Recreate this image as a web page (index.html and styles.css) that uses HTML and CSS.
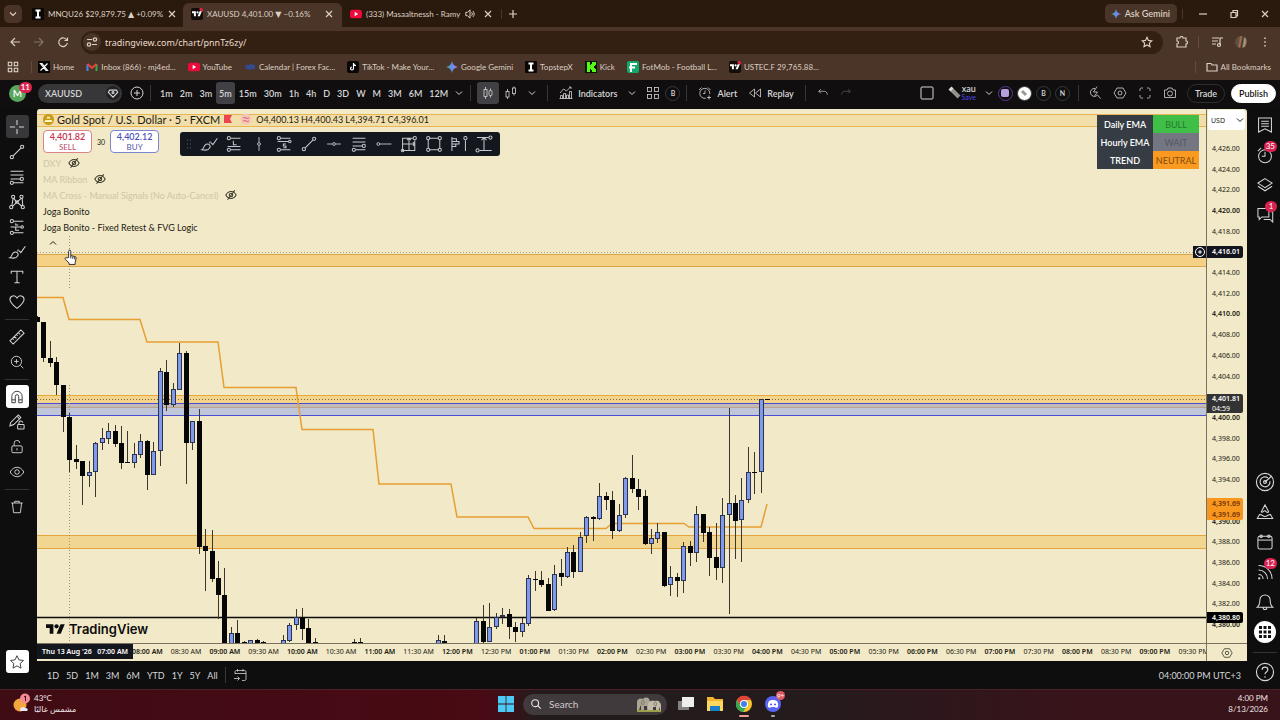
FILE: index.html
```html
<!DOCTYPE html>
<html lang="en">
<head>
    <meta charset="UTF-8">
    <title>XAUUSD 4,401.00 ▼ −0.16%</title>
    <link rel="stylesheet" href="styles.css">
</head>
<body>
    <svg class="defs" aria-hidden="true">
        <symbol id="chevron" viewBox="0 0 10 10"><path d="M2 3.500l3 3 3-3"/></symbol>
        <symbol id="close" viewBox="0 0 10 10"><path d="M2 2l6 6M8 2l-6 6"/></symbol>
        <symbol id="plus" viewBox="0 0 10 10"><path d="M5 1v8M1 5h8"/></symbol>
        <symbol id="tv" viewBox="0 0 36 28"><path fill="currentColor" stroke="none" d="M14 22H7V11H0V4h14v18zM28 22h-8l7.500-18h8L28 22z"/><circle cx="20" cy="8" r="4" fill="currentColor" stroke="none"/></symbol>
        <symbol id="youtube" viewBox="0 0 14 12"><rect x="0" y="1" width="14" height="10" rx="3" fill="#f0093a" stroke="none"/><path d="M5.500 3.500v5l4-2.500z" fill="#fff" stroke="none"/></symbol>
        <symbol id="spark" viewBox="0 0 12 12"><path fill="url(#sparkFill)" stroke="none" d="M6 0c.6 3.500 2.500 5.400 6 6-3.500.6-5.400 2.500-6 6-.6-3.500-2.500-5.400-6-6 3.500-.6 5.400-2.500 6-6z"/></symbol>
        <symbol id="topstep" viewBox="0 0 12 12"><rect width="12" height="12" rx="1" fill="#0b0706" stroke="none"/><path d="M3.500 2.500h5M3.500 9.500h5M6 2.500v7" stroke="#fff" stroke-width="2"/></symbol>
        <symbol id="cross" viewBox="0 0 28 28"><path d="M14 3v8M14 17v8M3 14h8M17 14h8"/></symbol>
        <symbol id="trend" viewBox="0 0 28 28"><path d="M8 20L20 8"/><circle cx="6" cy="22" r="2.500"/><circle cx="22" cy="6" r="2.500"/></symbol>
        <symbol id="fib" viewBox="0 0 28 28"><path d="M4 5h20M4 11h20M4 17h15M9 23h15"/><circle cx="21.500" cy="17" r="2.500"/><circle cx="6" cy="23" r="2.500"/></symbol>
        <symbol id="pattern" viewBox="0 0 28 28"><path d="M6 20L8 8M9 8l4 6M7 21l6-6 8-7M22 8l1 12M15 15l7 6"/><circle cx="8" cy="6" r="2.500"/><circle cx="21" cy="6" r="2.500"/><circle cx="14" cy="14" r="2"/><circle cx="5" cy="22" r="2.500"/><circle cx="23" cy="22" r="2.500"/></symbol>
        <symbol id="position" viewBox="0 0 28 28"><path d="M9 5h15M4 14h16M9 23h15M12 8v3h4M12 14v5h5"/><circle cx="6" cy="5" r="2.500"/><circle cx="6" cy="23" r="2.500"/><circle cx="22" cy="14" r="2"/></symbol>
        <symbol id="longpos" viewBox="0 0 28 28"><path d="M9 5h15M4 18h20M9 23h15M13 9v6h5"/><circle cx="6" cy="5" r="2.500"/><circle cx="6" cy="23" r="2.500"/></symbol>
        <symbol id="shortpos" viewBox="0 0 28 28"><path d="M9 5h15M4 10h17M9 23h15M17 14h-4v3h4v3h-4"/><circle cx="6" cy="5" r="2.500"/><circle cx="6" cy="23" r="2.500"/><circle cx="23" cy="10" r="2"/></symbol>
        <symbol id="brush" viewBox="0 0 28 28"><path d="M3 23c3-1 3-9 8-9 4 0 6 3 4 6-2 4-7 4-12 3zM17 12l3 3 7-10M15 13l1-3"/></symbol>
        <symbol id="text" viewBox="0 0 28 28"><path d="M5 9V5h18v4M14 5v18M10 23h8"/></symbol>
        <symbol id="heart" viewBox="0 0 28 28"><path d="M14 24C8 19 3 15 3 10c0-6 8-8 11-2 3-6 11-4 11 2 0 5-5 9-11 14z"/></symbol>
        <symbol id="ruler" viewBox="0 0 28 28"><path d="M3 20L20 3l5 5L8 25zM7 16l2 2M10 13l3 3M13 10l2 2M16 7l3 3"/></symbol>
        <symbol id="zoomin" viewBox="0 0 28 28"><circle cx="13" cy="13" r="9"/><path d="M13 9v8M9 13h8M20 20l5 5"/></symbol>
        <symbol id="magnet" viewBox="0 0 28 28"><path d="M5 24V13a9 9 0 0118 0v11h-6V13a3 3 0 00-6 0v11zM5 19h6M17 19h6"/></symbol>
        <symbol id="penlock" viewBox="0 0 28 28"><path d="M3 20l1-5L16 3l4 4L9 18zM14 5l4 4"/><rect x="15" y="18" width="10" height="7" rx="1"/><path d="M17 18v-2a3 3 0 016-1M20 21v1"/></symbol>
        <symbol id="lock" viewBox="0 0 28 28"><rect x="5" y="12" width="18" height="12" rx="2"/><path d="M9 12V8a5 5 0 0110-1M14 16v4"/></symbol>
        <symbol id="eye" viewBox="0 0 28 28"><path d="M2 14c6-11 18-11 24 0-6 11-18 11-24 0z"/><circle cx="14" cy="14" r="4"/></symbol>
        <symbol id="eyeoff" viewBox="0 0 28 28"><path d="M2 14c6-11 18-11 24 0-6 11-18 11-24 0zM6 25L23 3"/><circle cx="14" cy="14" r="4"/></symbol>
        <symbol id="trash" viewBox="0 0 28 28"><path d="M4 7h20M10 7V4h8v3M6 7l2 17h12l2-17"/></symbol>
        <symbol id="star" viewBox="0 0 28 28"><path d="M14 3l3.400 7.300 7.900 1-5.800 5.500 1.500 7.900-7-3.900-7 3.900 1.500-7.900L2.700 11.300l7.900-1z"/></symbol>
        <symbol id="vline" viewBox="0 0 28 28"><path d="M14 2v9M14 17v9"/><circle cx="14" cy="14" r="2.500"/></symbol>
        <symbol id="hline" viewBox="0 0 28 28"><path d="M2 14h9M17 14h9"/><circle cx="14" cy="14" r="2.500"/></symbol>
        <symbol id="hray" viewBox="0 0 28 28"><path d="M7 14h20"/><circle cx="4" cy="14" r="2.500"/></symbol>
        <symbol id="range" viewBox="0 0 28 28"><path d="M20 5H4v19h19V8M4 14h19M14 5v19M11 8l3-3 3 3M20 11l3 3-3 3"/><circle cx="23" cy="5" r="2.500"/><circle cx="4" cy="24" r="2"/></symbol>
        <symbol id="rect" viewBox="0 0 28 28"><path d="M7 5h14M7 23h14M5 7v14M23 7v14"/><circle cx="5" cy="5" r="2.500"/><circle cx="23" cy="5" r="2.500"/><circle cx="5" cy="23" r="2.500"/><circle cx="23" cy="23" r="2.500"/></symbol>
        <symbol id="profile" viewBox="0 0 28 28"><path d="M3 3v22M3 6h7v4h4v4H9v4H3M3 10h7M3 14h6M24 8v17"/><circle cx="24" cy="5" r="2.500"/></symbol>
        <symbol id="pricerange" viewBox="0 0 28 28"><path d="M3 4h18M7 24h19M14 4v20M10 8l4-4 4 4"/><circle cx="24" cy="4" r="2.500"/><circle cx="4" cy="24" r="2.500"/></symbol>
        <symbol id="candles" viewBox="0 0 28 28"><path d="M9 2v5M9 21v5M19 5v4M19 19v4"/><rect x="6" y="7" width="6" height="14"/><rect x="16" y="9" width="6" height="10" rx="2"/></symbol>
        <symbol id="candles2" viewBox="0 0 28 28"><path d="M7 6v5M7 22v4M20 1v3M20 15v4"/><rect x="4" y="11" width="6" height="11"/><rect x="17" y="4" width="6" height="11"/></symbol>
        <symbol id="indicators" viewBox="0 0 28 28"><path d="M2 14l7-8 6 4 8-8M20 2h4v4M3 25v-6h4v6M9 25V15h4v10M15 25v-7h4v7M21 25V11h4v14M1 25h26"/></symbol>
        <symbol id="grid" viewBox="0 0 28 28"><rect x="3" y="3" width="8" height="8"/><rect x="17" y="3" width="8" height="8"/><rect x="3" y="17" width="8" height="8"/><rect x="17" y="17" width="8" height="8"/></symbol>
        <symbol id="alert" viewBox="0 0 28 28"><path d="M23.500 16a10 10 0 10-8 8.500M14 9v6h-4M2 8l5-5M20 3l5 5M22 19v8M18 23h8"/></symbol>
        <symbol id="replay" viewBox="0 0 28 28"><path d="M13 6L3 14l10 8zM25 6l-10 8 10 8z"/></symbol>
        <symbol id="undo" viewBox="0 0 28 28"><path d="M9 5l-5 5 5 5M4 10h13c4 0 7 3 7 8"/></symbol>
        <symbol id="gear" viewBox="0 0 28 28"><path d="M8 4h12l6 10-6 10H8L2 14z"/><circle cx="14" cy="14" r="4"/></symbol>
        <symbol id="full" viewBox="0 0 28 28"><path d="M4 10V7c0-2 1-3 3-3h3M18 4h3c2 0 3 1 3 3v3M24 18v3c0 2-1 3-3 3h-3M10 24H7c-2 0-3-1-3-3v-3"/></symbol>
        <symbol id="camera" viewBox="0 0 28 28"><path d="M3 8h5l2-4h8l2 4h5v15H3z"/><circle cx="14" cy="15" r="5"/></symbol>
        <symbol id="search" viewBox="0 0 28 28"><circle cx="12" cy="12" r="8"/><path d="M18 18l7 7"/></symbol>
        <symbol id="quick" viewBox="0 0 28 28"><path d="M14 5a8 8 0 10 5 13l6 7M18 1l-7 11h8l-6 8"/></symbol>
        <symbol id="watch" viewBox="0 0 28 28"><path d="M4 3h20v22l-10-5-10 5zM8 8h12M8 12h12M8 16h12"/></symbol>
        <symbol id="clock" viewBox="0 0 28 28"><circle cx="14" cy="16" r="10"/><path d="M14 9v7h-5M3 8l5-5"/></symbol>
        <symbol id="layers" viewBox="0 0 28 28"><path d="M14 4l11 7-11 7-11-7zM3 16l11 7 11-7"/></symbol>
        <symbol id="chat" viewBox="0 0 28 28"><path d="M3 4h17v13H9l-4 4v-4H3zM23 9h3v16l-4-4H12"/></symbol>
        <symbol id="target" viewBox="0 0 28 28"><circle cx="14" cy="14" r="12"/><path d="M18 8a7 7 0 103 5M14 14l9-8"/><circle cx="14" cy="14" r="2"/></symbol>
        <symbol id="pyramid" viewBox="0 0 28 28"><path d="M8 14l6-11 6 11M8 14c3 2 4-3 6-2s3 4 6 2M6 17l-4 7h24l-4-7M6 18c3 0 5 3 8 3s5-3 8-3"/></symbol>
        <symbol id="calendar" viewBox="0 0 28 28"><rect x="3" y="5" width="22" height="20" rx="3"/><path d="M3 11h22"/><circle cx="8" cy="5" r="2"/><circle cx="20" cy="5" r="2"/></symbol>
        <symbol id="rss" viewBox="0 0 28 28"><path d="M4 4c12 0 21 9 21 21M4 11c8 0 14 6 14 14M4 18c4 0 7 3 7 7"/><circle cx="5" cy="24" r="1"/></symbol>
        <symbol id="bell" viewBox="0 0 28 28"><path d="M2 22c4-3 4-7 4-11a8 8 0 0116 0c0 4 0 8 4 11zM11 22c0 5 6 5 6 0"/></symbol>
        <symbol id="help" viewBox="0 0 28 28"><circle cx="14" cy="14" r="12"/><path d="M10 11c0-5 8-5 8 0 0 3-4 3-4 6M14 20v2"/></symbol>
        <symbol id="goto" viewBox="0 0 28 28"><path d="M4 12V8c0-2 1-3 3-3h16c2 0 3 1 3 3v14c0 2-1 3-3 3h-5M4 11h22M9 2v5M20 2v5M2 21h11M9 17l4 4-4 4"/></symbol>
        <linearGradient id="sparkFill"><stop offset="0" stop-color="#58b070"/><stop offset=".5" stop-color="#5b8cf5"/><stop offset="1" stop-color="#c583e0"/></linearGradient>
    </svg>

    <!-- browser chrome -->
    <header class="browser">
        <div class="tabs">
            <button class="tab-search" aria-label="Search tabs"><svg class="icon s10"><use href="#chevron"/></svg></button>
            <div class="tab">
                <svg class="icon s12"><use href="#topstep"/></svg>
                <span class="tab-title">MNQU26 $29,879.75 ▲ +0.09%</span>
                <button class="bare" aria-label="Close tab"><svg class="icon s10"><use href="#close"/></svg></button>
            </div>
            <div class="tab active">
                <span class="tv-badge"><svg class="icon s10"><use href="#tv"/></svg></span>
                <span class="tab-title">XAUUSD 4,401.00 ▼ −0.16%</span>
                <button class="bare" aria-label="Close tab"><svg class="icon s10"><use href="#close"/></svg></button>
            </div>
            <div class="tab">
                <svg class="icon s12"><use href="#youtube"/></svg>
                <span class="tab-title">(333) Masaaltnessh - Ramy</span>
                <svg class="icon s10 speaker" viewBox="0 0 12 12"><path d="M1 4h2l3-3v10l-3-3H1zM8 4c1 1 1 3 0 4M9.500 2.500c2 2 2 5 0 7"/></svg>
                <button class="bare" aria-label="Close tab"><svg class="icon s10"><use href="#close"/></svg></button>
            </div>
            <button class="bare new-tab" aria-label="New tab"><svg class="icon s10"><use href="#plus"/></svg></button>
            <button class="gemini"><svg class="icon s10"><use href="#spark"/></svg>Ask Gemini</button>
            <div class="window-buttons">
                <button class="bare" aria-label="Minimize"><svg class="icon s10" viewBox="0 0 10 10"><path d="M1 5h8"/></svg></button>
                <button class="bare" aria-label="Restore"><svg class="icon s10" viewBox="0 0 10 10"><path d="M2 3.500h5v5H2zM4 3V1.500h4.500V7H7"/></svg></button>
                <button class="bare" aria-label="Close"><svg class="icon s10"><use href="#close"/></svg></button>
            </div>
        </div>
        <div class="address-row">
            <button class="bare" aria-label="Back"><svg class="icon s12" viewBox="0 0 12 12"><path d="M11 6H2M6 2L2 6l4 4"/></svg></button>
            <button class="bare dim" aria-label="Forward"><svg class="icon s12" viewBox="0 0 12 12"><path d="M1 6h9M6 2l4 4-4 4"/></svg></button>
            <button class="bare" aria-label="Reload"><svg class="icon s12" viewBox="0 0 12 12"><path d="M10 4.500A4.300 4.300 0 1010.300 7M10.500 1.500v3h-3"/></svg></button>
            <div class="omnibox">
                <span class="site-info"><svg class="icon s12" viewBox="0 0 12 12"><path d="M1 3.500h5M6 8.500h5"/><circle cx="9" cy="3.500" r="1.700"/><circle cx="3" cy="8.500" r="1.700"/></svg></span>
                <input class="url" type="text" aria-label="Address" value="tradingview.com/chart/pnnTz6zy/">
                <button class="bare" aria-label="Bookmark"><svg class="icon bold s12"><use href="#star"/></svg></button>
            </div>
            <div class="extensions">
                <button class="bare" aria-label="Extensions"><svg class="icon s12" viewBox="0 0 12 12"><path d="M1 2h3c0-2 3-2 3 0h3v3c2 0 2 3 0 3v3H1V8c2 0 2-3 0-3z"/></svg></button>
                <button class="bare" aria-label="Media"><svg class="icon s12" viewBox="0 0 12 12"><path d="M1 2h7M1 5h6M1 8h4M9 9V2h3"/><circle cx="8" cy="9" r="1.500"/></svg></button>
                <span class="avatar-photo"></span>
                <button class="bare" aria-label="Menu"><svg class="icon s12" viewBox="0 0 12 12"><path d="M6 1.500v1.500M6 5.300v1.500M6 9v1.500" stroke-width="1.500"/></svg></button>
            </div>
        </div>
        <nav class="bookmarks">
            <button class="bare" aria-label="Tab groups"><svg class="icon bold s12"><use href="#grid"/></svg></button>
            <a href="#" class="first"><svg class="icon s12" viewBox="0 0 12 12"><rect width="12" height="12" fill="#080605" stroke="none"/><path d="M2.500 2.500h1.500l5.500 7H8zM9.500 2.500l-7 7" stroke="#fff"/></svg>Home</a>
            <a href="#"><svg class="icon s12" viewBox="0 0 12 12"><path d="M1.500 10V3" stroke="#4285f4" stroke-width="2"/><path d="M10.500 10V3" stroke="#34a853" stroke-width="2"/><path d="M1.500 3L6 7l4.500-4" stroke="#ea4335" stroke-width="2"/></svg>Inbox (866) - mj4ed...</a>
            <a href="#"><svg class="icon s12"><use href="#youtube"/></svg>YouTube</a>
            <a href="#"><svg class="icon s12" viewBox="0 0 12 12"><path d="M1 4h4l2-1 4 1v4H8l-2 1-4-1z" fill="#334a90" stroke="none"/></svg>Calendar | Forex Fac...</a>
            <a href="#"><svg class="icon s12" viewBox="0 0 12 12"><rect width="12" height="12" rx="2" fill="#080605" stroke="none"/><path d="M6.500 2v5.500a1.500 1.500 0 11-1.500-1.500M6.500 2.500c.5 1.500 1.500 2 2.500 2" stroke="#fff"/></svg>TikTok - Make Your...</a>
            <a href="#"><svg class="icon s12"><use href="#spark"/></svg>Google Gemini</a>
            <a href="#"><svg class="icon s12"><use href="#topstep"/></svg>TopstepX</a>
            <a href="#"><svg class="icon s12" viewBox="0 0 12 12"><rect width="12" height="12" fill="#081606" stroke="none"/><path d="M2 1h3v3h1V3h1V1h4v3h-1v1H9v2h1v1h1v3H7V9H6V8H5v3H2z" fill="#53fc18" stroke="none"/></svg>Kick</a>
            <a href="#"><svg class="icon s12" viewBox="0 0 12 12"><rect width="12" height="12" rx="2" fill="#12a96a" stroke="none"/><path d="M4 11V3h6M2 6.500h6" stroke="#fff" stroke-width="2"/></svg>FotMob - Football L...</a>
            <a href="#"><span class="tv-badge"><svg class="icon s10"><use href="#tv"/></svg></span>USTEC.F 29,765.88...</a>
            <a href="#" class="all"><svg class="icon s12" viewBox="0 0 12 12"><path d="M1 2.500h4l1 1.500h5v6H1z"/></svg>All Bookmarks</a>
        </nav>
    </header>

    <!-- chart toolbar -->
    <div class="toolbar">
        <button class="user" aria-label="Profile">M<span class="badge">11</span></button>
        <button class="symbol">XAUUSD<svg class="icon s14" viewBox="0 0 12 12"><circle cx="6" cy="6" r="6" fill="#222225" stroke="none"/><path d="M3 3.500h6l1 2L6 9.500l-4-4z"/><circle cx="6" cy="5.500" r=".8"/></svg></button>
        <button class="bare" aria-label="Add symbol"><svg class="icon s14" viewBox="0 0 14 14"><circle cx="7" cy="7" r="6"/><path d="M7 4v6M4 7h6"/></svg></button>
        <i class="sep"></i>
        <div class="intervals">
            <button>1m</button><button>2m</button><button>3m</button><button class="on">5m</button><button>15m</button><button>30m</button><button>1h</button><button>4h</button><button>D</button><button>3D</button><button>W</button><button>M</button><button>3M</button><button>6M</button><button>12M</button>
            <button class="last" aria-label="More intervals"><svg class="icon s10"><use href="#chevron"/></svg></button>
        </div>
        <i class="sep"></i>
        <button class="tool on" aria-label="Candles"><svg class="icon s14"><use href="#candles"/></svg></button>
        <button class="tool" aria-label="Bars"><svg class="icon s14"><use href="#candles2"/></svg></button>
        <button class="bare more" aria-label="Chart types"><svg class="icon s10"><use href="#chevron"/></svg></button>
        <i class="sep"></i>
        <button class="wide"><svg class="icon s14"><use href="#indicators"/></svg>Indicators</button>
        <button class="bare more" aria-label="Favorite indicators"><svg class="icon s10"><use href="#chevron"/></svg></button>
        <button class="tool" aria-label="Templates"><svg class="icon s14"><use href="#grid"/></svg></button>
        <button class="letter">B</button>
        <i class="sep"></i>
        <button class="wide"><svg class="icon s14"><use href="#alert"/></svg>Alert</button>
        <button class="wide"><svg class="icon s14"><use href="#replay"/></svg>Replay</button>
        <i class="sep"></i>
        <button class="tool" aria-label="Undo"><svg class="icon s12"><use href="#undo"/></svg></button>
        <button class="tool dim" aria-label="Redo"><svg class="icon s12 flip"><use href="#undo"/></svg></button>
        <div class="toolbar-right">
            <button class="tool" aria-label="Layout"><svg class="icon s14" viewBox="0 0 14 14"><rect x="1" y="1" width="12" height="12" rx="1"/></svg></button>
            <button class="layout-name"><svg class="icon s14" viewBox="0 0 14 14"><path d="M3 3l8 8" stroke="#96918c" stroke-width="4"/><path d="M2 2l2 2" stroke="#ddd" stroke-width="4"/></svg><span>xau<small>Save</small></span></button>
            <button class="bare more" aria-label="Layouts"><svg class="icon s10"><use href="#chevron"/></svg></button>
            <div class="letters">
                <button class="letter purple" aria-label="Layout 1"><span></span></button>
                <button class="letter white" aria-label="Layout 2"><svg class="icon s10" viewBox="0 0 10 10"><path d="M3 3l4 4" stroke="#999" stroke-width="3"/></svg></button>
                <button class="letter">B</button>
                <button class="letter">N</button>
            </div>
            <i class="sep"></i>
            <div class="actions">
                <button class="tool" aria-label="Quick search"><svg class="icon s14"><use href="#quick"/></svg></button>
                <button class="tool" aria-label="Settings"><svg class="icon s14"><use href="#gear"/></svg></button>
                <button class="tool" aria-label="Fullscreen"><svg class="icon s14"><use href="#full"/></svg></button>
                <button class="tool" aria-label="Snapshot"><svg class="icon s14"><use href="#camera"/></svg></button>
            </div>
            <button class="pill">Trade</button>
            <button class="pill publish">Publish</button>
        </div>
    </div>

    <div class="workspace">
        <aside class="draw-tools">
            <button class="on" aria-label="Cross"><svg class="icon s18"><use href="#cross"/></svg></button>
            <button aria-label="Trend line"><svg class="icon s18"><use href="#trend"/></svg></button>
            <button aria-label="Fib retracement"><svg class="icon s18"><use href="#fib"/></svg></button>
            <button aria-label="Patterns"><svg class="icon s18"><use href="#pattern"/></svg></button>
            <button aria-label="Positions"><svg class="icon s18"><use href="#position"/></svg></button>
            <button aria-label="Brush"><svg class="icon s18"><use href="#brush"/></svg></button>
            <button aria-label="Text"><svg class="icon s18"><use href="#text"/></svg></button>
            <button aria-label="Icons"><svg class="icon s18"><use href="#heart"/></svg></button>
            <hr>
            <button aria-label="Measure"><svg class="icon s18"><use href="#ruler"/></svg></button>
            <button aria-label="Zoom in"><svg class="icon s16"><use href="#zoomin"/></svg></button>
            <hr>
            <button class="white" aria-label="Magnet"><svg class="icon s16"><use href="#magnet"/></svg></button>
            <button aria-label="Keep drawing"><svg class="icon s18"><use href="#penlock"/></svg></button>
            <button aria-label="Lock"><svg class="icon s16"><use href="#lock"/></svg></button>
            <button aria-label="Hide"><svg class="icon s16"><use href="#eye"/></svg></button>
            <hr>
            <button aria-label="Remove"><svg class="icon s16"><use href="#trash"/></svg></button>
            <button class="white favorites" aria-label="Favorites"><svg class="icon s16"><use href="#star"/></svg></button>
        </aside>

        <main class="center">
            <div class="chart">
                <div class="pane">
                    <svg class="plot" id="plot" viewBox="0 0 1169 534" preserveAspectRatio="none"></svg>
                    <div class="legend">
                        <div class="legend-title">
                            <svg class="gold" viewBox="0 0 12 12"><circle cx="6" cy="6" r="6" fill="#c79a17"/><path d="M4.500 3h3l.6 2H3.900zM2.500 6.500h7l.8 2.200H1.700z" fill="#fff4c8"/></svg>
                            <span class="name">Gold Spot / U.S. Dollar · 5 · FXCM</span>
                            <svg class="flag" viewBox="0 0 8 8"><path d="M0 0h8L6 4l2 4H0z" fill="#ee4452"/></svg>
                            <svg class="approx" viewBox="0 0 12 12"><circle cx="6" cy="6" r="5.500" fill="#f5c6b8"/><path d="M3 5c2-1.500 4 1.500 6 0M3 8c2-1.500 4 1.500 6 0" stroke="#e0566a" fill="none"/></svg>
                            <span class="ohlc"><span>O4,400.13</span><span>H4,400.43</span><span>L4,394.71</span><span>C4,396.01</span></span>
                        </div>
                        <div class="quotes">
                            <button class="quote sell"><b>4,401.82</b>SELL</button>
                            <span class="spread">30</span>
                            <button class="quote buy"><b>4,402.12</b>BUY</button>
                        </div>
                        <div class="study off">DXY<svg class="icon s12"><use href="#eyeoff"/></svg></div>
                        <div class="study off">MA Ribbon<svg class="icon s12"><use href="#eyeoff"/></svg></div>
                        <div class="study off">MA Cross - Manual Signals (No Auto-Cancel)<svg class="icon s12"><use href="#eyeoff"/></svg></div>
                        <div class="study">Joga Bonito</div>
                        <div class="study">Joga Bonito - Fixed Retest &amp; FVG Logic</div>
                        <button class="collapse" aria-label="Collapse legend"><svg class="icon s10 up"><use href="#chevron"/></svg></button>
                    </div>
                    <div class="favorites-bar">
                        <svg class="grip" viewBox="0 0 6 10"><path d="M1 1h1M4 1h1M1 5h1M4 5h1M1 9h1M4 9h1" stroke="#555a66"/></svg>
                        <button aria-label="Brush"><svg class="icon s18"><use href="#brush"/></svg></button>
                        <button aria-label="Long position"><svg class="icon s18"><use href="#longpos"/></svg></button>
                        <button aria-label="Vertical line"><svg class="icon s16"><use href="#vline"/></svg></button>
                        <button aria-label="Short position"><svg class="icon s18"><use href="#shortpos"/></svg></button>
                        <button aria-label="Trend line"><svg class="icon s18"><use href="#trend"/></svg></button>
                        <button aria-label="Horizontal line"><svg class="icon s16"><use href="#hline"/></svg></button>
                        <button aria-label="Fib retracement"><svg class="icon s18"><use href="#fib"/></svg></button>
                        <button aria-label="Horizontal ray"><svg class="icon s16"><use href="#hray"/></svg></button>
                        <button aria-label="Date and price range"><svg class="icon s18"><use href="#range"/></svg></button>
                        <button aria-label="Rectangle"><svg class="icon s18"><use href="#rect"/></svg></button>
                        <button aria-label="Anchored volume profile"><svg class="icon s18"><use href="#profile"/></svg></button>
                        <button aria-label="Price range"><svg class="icon s18"><use href="#pricerange"/></svg></button>
                    </div>
                    <table class="trend-table">
                        <tr><th>Daily EMA</th><td class="bull">BULL</td></tr>
                        <tr><th>Hourly EMA</th><td class="wait">WAIT</td></tr>
                        <tr><th>TREND</th><td class="neutral">NEUTRAL</td></tr>
                    </table>
                    <div class="brand"><svg class="brand-logo"><use href="#tv"/></svg>TradingView</div>
                    <button class="add-alert" aria-label="Add alert at price"><svg class="icon s10" viewBox="0 0 10 10"><circle cx="5" cy="5" r="4.500"/><path d="M5 3v4M3 5h4"/></svg></button>
                    <svg class="hand" viewBox="0 0 14 17"><path d="M5 9V2.500c0-2 2.300-2 2.300 0V7l4.500 1c1.200.3 1.400 1 1.200 2.200L12 14.500v2H5.500v-1.500L1.500 11c-1-1.300.5-2.500 1.700-1.500z" fill="#fff" stroke="#222"/><path d="M7.300 7v3M9.500 8v2.500M11.500 8.500V11" stroke="#222"/></svg>
                </div>
                <div class="price-axis">
                    <label class="currency">
                        <select aria-label="Currency"><option>USD</option></select>
                        <svg class="icon s10"><use href="#chevron"/></svg>
                    </label>
                    <div class="prices" id="prices"></div>
                    <span class="price-tag cursor-tag">4,416.01</span>
                    <span class="price-tag last-tag">4,401.81<small>04:59</small></span>
                    <span class="price-tag ema-tag">4,391.69<br>4,391.69</span>
                    <span class="price-tag level-tag">4,380.80</span>
                </div>
                <div class="time-axis">
                    <div class="times" id="times"></div>
                    <span class="time-tag">Thu 13 Aug '26 &nbsp; 07:00 AM</span>
                </div>
                <button class="axis-settings" aria-label="Axis settings"><svg class="icon s12"><use href="#gear"/></svg></button>
            </div>
            <div class="range-bar">
                <button>1D</button><button>5D</button><button>1M</button><button>3M</button><button>6M</button><button>YTD</button><button>1Y</button><button>5Y</button><button>All</button>
                <i class="sep"></i>
                <button class="goto" aria-label="Go to date"><svg class="icon s14"><use href="#goto"/></svg></button>
                <span class="clock">04:00:00 PM UTC+3</span>
            </div>
        </main>

        <aside class="rail">
            <button aria-label="Watchlist"><svg class="icon s18"><use href="#watch"/></svg></button>
            <button aria-label="Alerts"><svg class="icon s18"><use href="#clock"/></svg><span class="badge">35</span></button>
            <button aria-label="Object tree"><svg class="icon s18"><use href="#layers"/></svg></button>
            <button aria-label="Chats"><svg class="icon s18"><use href="#chat"/></svg><span class="badge">1</span></button>
            <button class="push" aria-label="Screeners"><svg class="icon s20"><use href="#target"/></svg></button>
            <button aria-label="Pine"><svg class="icon s18"><use href="#pyramid"/></svg></button>
            <button aria-label="Calendars"><svg class="icon s18"><use href="#calendar"/></svg></button>
            <button aria-label="News"><svg class="icon s18"><use href="#rss"/></svg><span class="badge">12</span></button>
            <button aria-label="Notifications"><svg class="icon s18"><use href="#bell"/></svg></button>
            <button class="apps" aria-label="Products"><svg viewBox="0 0 22 22"><circle cx="11" cy="11" r="11" fill="#fff"/><path d="M5 6.500h3M9.500 6.500h3M14 6.500h3M5 11h3M9.500 11h3M14 11h3M5 15.500h3M9.500 15.500h3M14 15.500h3" stroke="#111" stroke-width="3"/></svg></button>
            <hr>
            <button aria-label="Help"><svg class="icon s20"><use href="#help"/></svg></button>
        </aside>
    </div>

    <footer class="taskbar">
        <div class="weather">
            <svg viewBox="0 0 18 20"><circle cx="7" cy="12" r="6.500" fill="#f5a63c"/><path d="M7 17c0-3 4-4 5-2 3-.5 4 3 1 3H9c-1 0-2 0-2-1z" fill="#e3ecf8"/><circle cx="12" cy="5.500" r="5" fill="#f48a94"/><path d="M11 4l1.500-1v5" stroke="#40121a" fill="none"/></svg>
            <div>43°C<br><span lang="ar" dir="rtl">مشمس غالبًا</span></div>
        </div>
        <div class="task-center">
            <button class="bare" aria-label="Start"><svg class="start" viewBox="0 0 16 16"><path d="M0 0h7.600v7.600H0zM8.400 0H16v7.600H8.400zM0 8.400h7.600V16H0zM8.400 8.400H16V16H8.400z" fill="#4cc9f5"/></svg></button>
            <label class="task-search">
                <svg class="icon bold s12"><use href="#search"/></svg>
                <input type="text" placeholder="Search" aria-label="Search">
                <svg class="elephants" viewBox="0 0 28 17"><path d="M2 15h24" stroke="#9aa04a" stroke-width="2"/><path d="M2 14V7c0-5 4-5 6-4 3-3 7-1 7 3v8h-3v-4H9v4H6V9c-1 1-1 3-2 5z" fill="#aaa595"/><path d="M13 14V9c0-4 4-5 7-4 3-1 6 1 6 5v5c-1 0-1-3-2-4v3h-3v-3h-3v3z" fill="#c4bca8"/><path d="M8 4c-2 1-2 4 0 5 1-1 2-4 0-5M20 6c-2 1-1 4 1 4 1-2 1-4-1-4" stroke="#6a6456" stroke-width=".7" fill="none"/></svg>
            </label>
            <button class="app" aria-label="Task view"><svg viewBox="0 0 18 18"><path d="M1 6h11v9H1z" fill="#85817f"/><path d="M5 2h12v10H5z" fill="#eee"/></svg></button>
            <button class="app" aria-label="File Explorer"><svg viewBox="0 0 18 18"><path d="M1 2h6l2 2h8v12H1z" fill="#f2b52b"/><path d="M1 6h16v10H1z" fill="#ffd75e"/><path d="M4 11h10v5H4z" fill="#1a81c8"/></svg></button>
            <button class="app running" aria-label="Chrome"><svg viewBox="0 0 18 18"><circle cx="9" cy="9" r="8" fill="#f6c52c"/><path d="M2 5a8 8 0 0114 0H9L5.500 11z" fill="#e2433a"/><path d="M2 5a8 8 0 006 12l4-6H5.500z" fill="#34a853"/><circle cx="9" cy="9" r="4" fill="#fff"/><circle cx="9" cy="9" r="3" fill="#3f80ee"/></svg></button>
            <button class="app open" aria-label="Discord"><svg viewBox="0 0 18 18"><circle cx="9" cy="9" r="8" fill="#5865f2"/><path d="M5 6c2-1.500 6-1.500 8 0 1 2 1.500 4 1 6l-2 1-1-1H7l-1 1-2-1c-.5-2 0-4 1-6z" fill="#fff"/><circle cx="7" cy="9.500" r="1.100" fill="#5865f2"/><circle cx="11" cy="9.500" r="1.100" fill="#5865f2"/></svg><span class="badge">9+</span></button>
        </div>
        <div class="datetime">4:00 PM<br>8/13/2026</div>
    </footer>

    <script src="script.js"></script>
</body>
</html>
```
FILE: styles.css
```css
* {
    box-sizing: border-box;
}
body {
    margin: 0;
    height: 100vh;
    display: flex;
    flex-direction: column;
    overflow: hidden;
    background: #0e0e0f;
    color: #d6d6d8;
    font-family: Lato, "Noto Sans", "DejaVu Sans", sans-serif;
    font-size: 9px;
}
button, input, select {
    font: inherit;
    color: inherit;
    padding: 0;
    border: 0;
    background: none;
}
button {
    position: relative;
    display: flex;
    align-items: center;
    justify-content: center;
    flex: none;
    cursor: pointer;
    white-space: nowrap;
}
a {
    color: inherit;
    text-decoration: none;
}
svg {
    display: block;
    flex: none;
}
.defs {
    position: absolute;
    width: 0;
    height: 0;
}
.icon {
    fill: none;
    stroke: currentColor;
    stroke-width: 1.2;
}
.s10 { width: 10px; height: 10px; }
.s12 { width: 12px; height: 12px; }
.s14 { width: 14px; height: 14px; }
.s16 { width: 16px; height: 16px; }
.s18 { width: 18px; height: 18px; }
.s20 { width: 20px; height: 20px; }
.toolbar .icon, .workspace .icon {
    stroke-width: 1.6;
}
.toolbar .icon[viewBox], .workspace .icon[viewBox], .toolbar .s10, .workspace .s10 {
    stroke-width: 1;
}
.icon.bold {
    stroke-width: 2.6;
}
.flip { transform: scaleX(-1); }
.up { transform: rotate(180deg); }
.dim { opacity: .4; }
.badge {
    position: absolute;
    top: 1px;
    right: 3px;
    min-width: 12px;
    padding: 0 2px;
    border-radius: 6px;
    background: #d92350;
    color: #fff;
    font-size: 8px;
    line-height: 11px;
    text-align: center;
}
.sep {
    width: 1px;
    height: 16px;
    background: #38383b;
    flex: none;
}

/* browser */
.browser {
    background: #4a3528;
    color: #dccfc3;
    flex: none;
}
.tabs {
    display: flex;
    align-items: center;
    height: 27px;
    padding: 0 2px 0 4px;
    background: #2a1a0d;
}
.tab-search {
    width: 18px;
    height: 18px;
    border-radius: 5px;
    background: #493427;
}
.tab {
    display: flex;
    align-items: center;
    align-self: flex-end;
    gap: 4px;
    width: 159px;
    height: 24px;
    padding: 0 8px 3px;
    border-radius: 6px 6px 0 0;
}
.tab:first-of-type {
    margin-left: 2px;
}
.tab.active {
    background: #4a3528;
}
.tab-title {
    flex: 1;
    font-size: 8px;
    white-space: nowrap;
}
.speaker {
    margin-right: 4px;
}
.tv-badge {
    display: flex;
    width: 12px;
    height: 12px;
    align-items: center;
    justify-content: center;
    flex: none;
    border-radius: 2px;
    background: radial-gradient(circle at 11px 1px, #e02040 2px, #120c0a 3px);
    color: #fff;
}
.new-tab {
    padding-left: 6px;
    border-left: 1px solid #4a3528;
}
.gemini {
    gap: 4px;
    height: 19px;
    margin-left: auto;
    padding: 0 7px 0 6px;
    border-radius: 5px;
    background: #493528;
    font-weight: 600;
}
.window-buttons {
    display: flex;
    gap: 21px;
    margin-left: 5px;
    padding: 0 8px 0 15px;
    border-left: 1px solid #4a3528;
}
.address-row {
    display: flex;
    align-items: center;
    gap: 12px;
    height: 30px;
    padding: 0 9px;
}
.omnibox {
    display: flex;
    align-items: center;
    flex: 1;
    height: 23px;
    padding: 0 10px 0 2px;
    border-radius: 12px;
    background: #342012;
}
.site-info {
    display: flex;
    align-items: center;
    justify-content: center;
    width: 18px;
    height: 18px;
    border-radius: 9px;
    background: #493528;
}
.url {
    flex: 1;
    margin-left: 4px;
    font-family: "Noto Sans", sans-serif;
    color: #e8dccf;
    outline: none;
}
.extensions {
    display: flex;
    align-items: center;
    gap: 12px;
    margin-left: 1px;
}
.extensions button:first-child {
    padding-right: 10px;
    border-right: 1px solid #634c3c;
}
.avatar-photo {
    width: 12px;
    height: 12px;
    border-radius: 6px;
    background: linear-gradient(100deg, #5b5045 30%, #b66b45 45%, #2f3a34 60%, #c0a080 75%, #3b3128);
}
.bookmarks {
    display: flex;
    align-items: center;
    gap: 12px;
    height: 23px;
    padding: 0 9px 4px 7px;
    font-size: 8px;
}
.bookmarks a {
    display: flex;
    align-items: center;
    gap: 3px;
    white-space: nowrap;
}
.bookmarks .first {
    padding-left: 6px;
    border-left: 1px solid #634c3c;
}
.bookmarks .all {
    margin-left: auto;
    padding-left: 10px;
    border-left: 1px solid #634c3c;
}

/* top toolbar */
.toolbar {
    display: flex;
    align-items: center;
    gap: 1px;
    flex: none;
    height: 28px;
    padding: 0 4px 2px 9px;
    background: #100e0f;
    font-weight: 600;
}
.user {
    width: 17px;
    height: 17px;
    margin-right: 11px;
    border-radius: 9px;
    background: #58a55c;
    color: #fff;
    font-size: 10px;
}
.user .badge {
    top: -3px;
    right: -6px;
}
.symbol {
    justify-content: space-between;
    width: 84px;
    height: 19px;
    margin-right: 7px;
    padding: 0 2px 0 7px;
    border-radius: 10px;
    background: #37373a;
}
.toolbar .sep {
    margin: 0 5px;
}
.intervals {
    display: flex;
    gap: 1px;
}
.intervals button {
    height: 22px;
    padding: 0 3px;
    border-radius: 3px;
}
.intervals .last {
    padding: 0 0 0 2px;
}
.toolbar .on {
    background: #414145;
}
.tool {
    width: 22px;
    height: 22px;
    border-radius: 3px;
}
.more {
    width: 18px;
}
.wide {
    gap: 5px;
    padding: 0 5px;
}
.letter {
    width: 15px;
    height: 15px;
    border: 1px solid #333a3c;
    border-radius: 8px;
    font-size: 7px;
}
.letter.purple {
    border-color: #5a3a90;
}
.letter.purple span {
    width: 8px;
    height: 8px;
    border-radius: 2px;
    background: #b8a0e0;
}
.letter.white {
    background: #fff;
}
.letters {
    display: flex;
    gap: 4px;
    margin-right: 3px;
}
.toolbar-right {
    display: flex;
    align-items: center;
    margin-left: auto;
}
.layout-name {
    margin: 0 4px 0 10px;
    line-height: 8px;
}
.layout-name small {
    display: block;
    color: #4a46e8;
    font-size: 7px;
    font-weight: 400;
}
.actions {
    display: flex;
    gap: 3px;
}
.pill {
    height: 19px;
    margin-left: 6px;
    padding: 0 7px;
    border: 1px solid #2e2e30;
    border-radius: 10px;
}
.pill.publish {
    border-color: #fff;
    background: #fff;
    color: #131313;
}

/* workspace */
.workspace {
    display: flex;
    flex: 1;
    min-height: 0;
    padding-top: 1px;
}
.draw-tools {
    display: flex;
    flex-direction: column;
    align-items: center;
    width: 37px;
    padding: 5px 3px 15px 0;
}
.draw-tools button {
    width: 23px;
    height: 23px;
    margin: 1px 0;
    border-radius: 3px;
}
.draw-tools .on {
    background: #38383b;
}
.draw-tools .white {
    background: #fff;
    color: #333;
}
.draw-tools .favorites {
    margin-top: auto;
}
.draw-tools hr, .rail hr {
    width: 24px;
    margin: 5px 0 4px;
    border: 0;
    border-top: 1px solid #333336;
}
.center {
    display: flex;
    flex-direction: column;
    flex: 1;
    min-width: 0;
}
.chart {
    display: grid;
    grid-template-columns: 1fr 41px;
    grid-template-rows: 1fr 18px;
    flex: 1;
    min-height: 0;
    border-radius: 3px 3px 0 0;
    background: #f1e9c7;
    color: #1c1a12;
    overflow: hidden;
}
.pane {
    position: relative;
    min-height: 0;
}
.plot {
    position: absolute;
    width: 100%;
    height: 100%;
}
.legend {
    position: absolute;
    left: 6px;
    top: 2px;
}
.legend-title {
    display: flex;
    align-items: center;
    height: 16px;
}
.gold {
    width: 11px;
    height: 11px;
}
.name {
    margin: 0 4px 0 3px;
    font-size: 11px;
}
.flag {
    width: 8px;
    height: 8px;
}
.approx {
    width: 12px;
    height: 12px;
    margin: 0 4px 0 8px;
}
.ohlc {
    display: flex;
    gap: 2px;
}
.quotes {
    display: flex;
    align-items: center;
    gap: 5px;
    margin: 3px 0 2px;
}
.quote {
    flex-direction: column;
    width: 49px;
    height: 23px;
    border: 1px solid #d9838b;
    border-radius: 4px;
    background: #fff;
    color: #b84a63;
    font-size: 8px;
    line-height: 10px;
}
.quote b {
    color: #c5304d;
    font-size: 9px;
    font-weight: 600;
}
.quote.buy {
    border-color: #7c86cf;
    color: #5558a6;
}
.quote.buy b {
    color: #4a50bd;
}
.spread {
    font-size: 7px;
}
.study {
    display: flex;
    align-items: center;
    gap: 7px;
    height: 16px;
    font-size: 9px;
}
.study.off {
    color: #cdc7a6;
}
.study .icon {
    color: #3a372a;
    stroke-width: 2.4;
}
.collapse {
    width: 20px;
    height: 16px;
}
.favorites-bar {
    position: absolute;
    left: 143px;
    top: 23px;
    display: flex;
    align-items: center;
    height: 24px;
    padding: 0 4px 0 6px;
    border-radius: 3px;
    background: #14171d;
    color: #c4c7cd;
}
.favorites-bar button {
    width: 25px;
    height: 24px;
}
.grip {
    width: 6px;
    height: 10px;
    margin-right: 4px;
}
.trend-table {
    position: absolute;
    right: 7px;
    top: 6px;
    border-collapse: collapse;
    font-size: 9px;
    text-align: center;
}
.trend-table th, .trend-table td {
    height: 18px;
    padding: 0;
}
.trend-table th {
    width: 56px;
    background: #363c44;
    color: #fff;
    font-weight: 600;
}
.trend-table td {
    width: 46px;
}
.bull { background: #3fbf48; color: #237a2b; }
.wait { background: #747781; color: #555862; }
.neutral { background: #fa9a20; color: #7f4b0c; }
.brand {
    position: absolute;
    left: 9px;
    bottom: 6px;
    display: flex;
    align-items: center;
    gap: 4px;
    color: #0c0c0c;
    font-family: Inter, sans-serif;
    font-size: 13px;
    font-weight: 600;
}
.brand-logo {
    width: 19px;
    height: 15px;
}
.add-alert {
    position: absolute;
    right: 0;
    top: 137px;
    width: 13px;
    height: 12px;
    background: #12151d;
    color: #fff;
}
.hand {
    position: absolute;
    left: 27px;
    top: 140px;
    width: 13px;
    height: 16px;
    fill: none;
}
.price-axis, .time-axis {
    position: relative;
    font-family: "Noto Sans", sans-serif;
    font-size: 7px;
}
.price-axis {
    display: flex;
    flex-direction: column;
    min-height: 0;
    padding-bottom: 8px;
    border-left: 1px solid #77735f;
}
.currency {
    display: flex;
    align-items: center;
    flex: none;
    height: 20px;
    margin: 1px 2px 8px 1px;
    padding-left: 3px;
    border-radius: 3px;
    background: #fff;
}
.currency select {
    flex: 1;
    min-width: 0;
    appearance: none;
    outline: none;
}
.prices {
    display: flex;
    flex-direction: column;
    flex: 1;
}
.prices span {
    display: flex;
    align-items: center;
    flex: 1;
    padding-left: 5px;
    white-space: nowrap;
}
.prices .major, .times .major {
    font-weight: 600;
}
.price-tag {
    position: absolute;
    left: 0;
    width: 36px;
    padding-left: 5px;
    border-radius: 0 2px 2px 0;
    line-height: 11px;
    font-weight: 600;
    color: #fff;
}
.cursor-tag {
    top: 137px;
    background: #12151d;
    line-height: 12px;
}
.last-tag {
    top: 285px;
    background: #333;
    line-height: 10px;
}
.last-tag small {
    display: block;
    font-size: 7px;
    line-height: 9px;
    font-weight: 400;
}
.ema-tag {
    top: 389px;
    background: #f8961e;
    color: #6e3206;
}
.level-tag {
    top: 503px;
    background: #000;
}
.time-axis {
    border-top: 1px solid #77735f;
    overflow: hidden;
}
.times {
    display: flex;
    margin: 0 -7px 0 91px;
    line-height: 16px;
}
.times span {
    flex: 1 1 0;
    min-width: 0;
    display: flex;
    justify-content: center;
    white-space: nowrap;
}
.time-tag {
    position: absolute;
    left: 0;
    top: 0;
    padding: 0 5px;
    background: #14161d;
    color: #fff;
    font-weight: 600;
    line-height: 15px;
    white-space: nowrap;
}
.axis-settings {
    border-top: 1px solid #77735f;
    border-left: 1px solid #77735f;
}
.range-bar {
    display: flex;
    align-items: center;
    gap: 7px;
    height: 28px;
    padding: 0 6px 0 10px;
    background: #0e0e0f;
}
.clock {
    margin-left: auto;
}
.rail {
    display: flex;
    flex-direction: column;
    align-items: center;
    width: 33px;
    padding: 1px 0 2px 3px;
}
.rail button {
    width: 30px;
    height: 30px;
}
.rail .push {
    margin-top: auto;
}
.apps svg {
    width: 22px;
    height: 22px;
}

/* taskbar */
.taskbar {
    display: grid;
    grid-template-columns: 1fr auto 1fr;
    align-items: center;
    height: 31px;
    padding: 0 12px 2px 13px;
    border-top: 1px solid #4c2028;
    background: linear-gradient(90deg, #400c14, #480a14 38%, #241b1d 42%, #241b1d 63%, #38131a 84%);
    color: #efe3e4;
    font-size: 8px;
    line-height: 11px;
}
.weather {
    display: flex;
    gap: 3px;
}
.weather svg {
    width: 18px;
    height: 20px;
}
.task-center {
    display: flex;
    align-items: center;
    gap: 9px;
}
.start {
    width: 16px;
    height: 16px;
}
.task-search {
    display: flex;
    align-items: center;
    gap: 7px;
    width: 144px;
    height: 21px;
    padding: 0 4px 0 7px;
    border-radius: 11px;
    background: #413a3c;
    font-size: 10px;
}
.task-search input {
    flex: 1;
    min-width: 0;
    outline: none;
}
.task-search input::placeholder {
    color: #d0c9ca;
}
.elephants {
    width: 28px;
    height: 17px;
}
.app {
    width: 20px;
    height: 24px;
}
.app > svg {
    width: 18px;
    height: 18px;
}
.app .badge {
    top: -1px;
    right: -2px;
    min-width: 9px;
    padding: 0 1px;
    font-size: 6px;
    line-height: 9px;
    background: #e05a66;
}
.running::after, .open::after {
    content: "";
    position: absolute;
    bottom: -1px;
    width: 10px;
    height: 2px;
    border-radius: 1px;
    background: #f09a94;
}
.open::after {
    width: 4px;
    background: #aaa;
}
.datetime {
    text-align: right;
}
```
FILE: script.js
```javascript
// bar index, direction, high, body top, body bottom, low
const candles = [
    [0, 'd', 207, 208, 213, 213], [1, 'd', 213, 213, 249, 253], [2, 'd', 232, 249, 254, 258],
    [3, 'd', 248, 253, 276, 286], [4, 'd', 276, 276, 308, 323], [5, 'd', 304, 308, 351, 363],
    [6, 'd', 336, 350, 353, 360], [7, 'd', 352, 352, 367, 396], [8, 'u', 352, 363, 367, 378],
    [9, 'u', 333, 334, 363, 388], [10, 'u', 319, 329, 334, 341], [11, 'u', 314, 322, 330, 335],
    [12, 'd', 316, 322, 335, 338], [13, 'd', 317, 334, 354, 360], [14, 'd', 322, 353, 354, 354],
    [15, 'u', 334, 345, 354, 359], [16, 'u', 325, 332, 346, 349], [17, 'd', 331, 332, 366, 381],
    [18, 'u', 333, 342, 366, 366], [19, 'u', 259, 262, 342, 357], [20, 'd', 251, 263, 296, 302],
    [21, 'u', 274, 280, 296, 298], [22, 'u', 234, 244, 281, 281], [23, 'd', 242, 244, 334, 375],
    [24, 'u', 312, 312, 334, 341], [25, 'd', 300, 312, 438, 445], [26, 'd', 420, 437, 442, 482],
    [27, 'd', 421, 442, 470, 473], [28, 'd', 452, 469, 486, 510], [29, 'd', 459, 486, 536, 536],
    [30, 'u', 518, 524, 536, 536], [31, 'd', 511, 524, 536, 536], [32, 'd', 532, 533, 536, 536],
    [33, 'u', 531, 531, 536, 536], [34, 'd', 530, 531, 536, 536], [35, 'd', 532, 533, 536, 536],
    [38, 'u', 526, 531, 536, 536], [39, 'u', 514, 516, 532, 533], [40, 'u', 500, 508, 516, 521],
    [41, 'd', 499, 508, 520, 531], [42, 'd', 510, 519, 536, 536], [43, 'd', 529, 533, 536, 536],
    [49, 'd', 530, 533, 536, 536], [50, 'd', 529, 533, 536, 536], [62, 'u', 526, 531, 536, 536],
    [63, 'd', 526, 532, 536, 536], [68, 'u', 509, 512, 536, 536], [69, 'd', 496, 512, 533, 534],
    [70, 'u', 494, 518, 533, 533], [71, 'u', 504, 508, 518, 520], [72, 'u', 499, 506, 508, 515],
    [73, 'd', 500, 505, 518, 530], [74, 'd', 513, 518, 523, 533], [75, 'u', 509, 514, 523, 528],
    [76, 'u', 466, 469, 515, 517], [77, 'd', 462, 470, 471, 482], [78, 'd', 462, 471, 476, 478],
    [79, 'd', 469, 475, 502, 502], [80, 'u', 456, 465, 501, 502], [81, 'd', 450, 464, 468, 477],
    [82, 'u', 438, 443, 468, 469], [83, 'd', 436, 443, 463, 469], [84, 'u', 423, 428, 463, 463],
    [85, 'u', 407, 408, 427, 434], [86, 'd', 407, 408, 410, 432], [87, 'u', 374, 387, 410, 411],
    [88, 'd', 383, 387, 391, 401], [89, 'd', 382, 391, 422, 430], [90, 'u', 395, 406, 422, 423],
    [91, 'u', 368, 369, 406, 409], [92, 'd', 346, 369, 380, 384], [93, 'd', 370, 380, 388, 401],
    [94, 'd', 381, 387, 435, 436], [95, 'u', 420, 429, 435, 445], [96, 'u', 414, 423, 430, 434],
    [97, 'd', 423, 423, 477, 478], [98, 'u', 457, 468, 476, 487], [99, 'd', 464, 468, 472, 488],
    [100, 'u', 433, 437, 472, 484], [101, 'd', 432, 437, 444, 457], [102, 'u', 397, 405, 444, 453],
    [103, 'd', 405, 405, 424, 433], [104, 'd', 418, 423, 449, 467], [105, 'd', 414, 448, 459, 471],
    [106, 'u', 389, 406, 459, 474], [107, 'u', 299, 394, 406, 505], [108, 'd', 386, 394, 412, 450],
    [109, 'u', 369, 391, 411, 453], [110, 'u', 338, 363, 391, 394], [111, 'd', 343, 363, 364, 385],
    [112, 'u', 290, 290, 363, 384], [113, 'd', 290, 290, 291, 291]
];
const barStep = 6.463;

function band(top, bottom, fill, stroke) {
    return `<rect x="-2" y="${top}" width="1173" height="${bottom - top}" fill="${fill}" stroke="${stroke}" stroke-width="1"/>`;
}

function hline(y, color, width, dash) {
    return `<path d="M0 ${y}H1169" stroke="${color}" stroke-width="${width}" stroke-dasharray="${dash || 'none'}"/>`;
}

function drawPlot() {
    let out = '';
    out += band(5.5, 17.5, 'rgba(247,190,80,.25)', '#e8b650');
    out += band(145.5, 157.5, 'rgba(247,190,80,.55)', '#d9a548');
    out += band(286.5, 298.5, 'rgba(247,190,80,.5)', '#e8a93c');
    out += band(294.5, 306.5, 'rgba(130,155,240,.45)', '#4a4bd0');
    out += band(426.5, 439.5, 'rgba(240,190,80,.45)', '#e3a53c');
    out += hline(143.5, '#a8a07c', 1, '1 2');
    out += hline(290.5, '#7a6a48', 1, '1 2');
    out += hline(508.5, '#0b0b0b', 1.5);
    out += '<path d="M32.500 127V180M32.500 276V534" stroke="#9b957a" stroke-dasharray="1 2"/>';
    out += '<path d="M0 188.500H26L32 210.500H103L110 233H181L187 278.500H259L265 320.500H336L342 375H414L420 408H491L497 419.500H569L575 414.500H647L652 418H724L730 395" fill="none" stroke="#e79f33" stroke-width="1.500"/>';
    for (const [i, dir, high, top, bottom, low] of candles) {
        const x = Math.round(i * barStep);
        out += `<path d="M${x + 0.5} ${high}V${low}" stroke="#3a382e"/>`;
        if (dir === 'u') {
            out += `<rect x="${x - 1.5}" y="${top + 0.5}" width="4" height="${Math.max(bottom - top - 1, 1)}" fill="#7f9aea" stroke="#2c3350"/>`;
        } else {
            out += `<rect x="${x - 2}" y="${top}" width="5" height="${bottom - top}" fill="#060606"/>`;
        }
    }
    document.getElementById('plot').innerHTML = out;
}

function drawPrices() {
    let out = '';
    for (let p = 4426; p >= 4380; p -= 2) {
        out += `<span class="${p % 10 === 0 ? 'major' : ''}">${p.toLocaleString('en-US')}.00</span>`;
    }
    document.getElementById('prices').innerHTML = out;
}

function drawTimes() {
    let out = '';
    for (let m = 8 * 60; m <= 21 * 60 + 30; m += 30) {
        const hour = Math.floor(m / 60);
        const label = String((hour + 11) % 12 + 1).padStart(2, '0') + ':' + String(m % 60).padStart(2, '0');
        out += `<span class="${m % 60 === 0 ? 'major' : ''}">${label} ${hour < 12 ? 'AM' : 'PM'}</span>`;
    }
    document.getElementById('times').innerHTML = out;
}

drawPlot();
drawPrices();
drawTimes();
```
